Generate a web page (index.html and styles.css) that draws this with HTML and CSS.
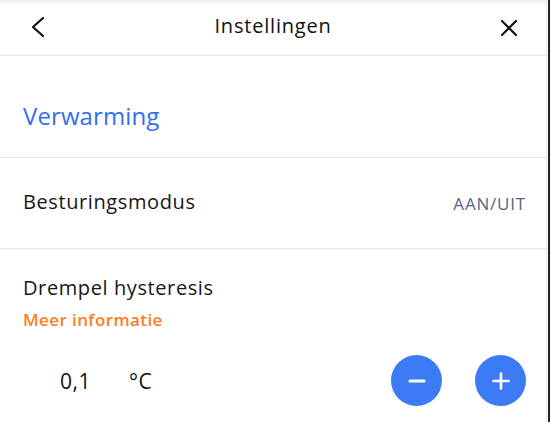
FILE: index.html
```html
<!DOCTYPE html>
<html lang="nl">
<head>
<meta charset="utf-8">
<link rel="stylesheet" href="styles.css">
</head>
<body>
<div class="frame">
  <div class="screen">
    <header class="topbar">
      <span class="icon-btn back">
        <svg width="16" height="22" viewBox="0 0 16 22"><path d="M13 2 L3 11 L13 20" fill="none" stroke="#111" stroke-width="2.2" stroke-linecap="round" stroke-linejoin="round"/></svg>
      </span>
      <h1 class="title">Instellingen</h1>
      <span class="icon-btn close">
        <svg width="18" height="18" viewBox="0 0 18 18"><path d="M2 2 L16 16 M16 2 L2 16" fill="none" stroke="#111" stroke-width="2.2" stroke-linecap="round"/></svg>
      </span>
    </header>
    <section class="section-head">
      <h2 class="section-title">Verwarming</h2>
    </section>
    <section class="row">
      <span class="label">Besturingsmodus</span>
      <span class="value">AAN/UIT</span>
    </section>
    <section class="setting">
      <div class="label">Drempel hysteresis</div>
      <a class="more">Meer informatie</a>
      <div class="stepper">
        <div class="reading">
          <span class="num">0,1</span>
          <span class="unit">°C</span>
        </div>
        <div class="buttons">
          <span class="round-btn">
            <svg width="24" height="24" viewBox="0 0 24 24"><path d="M5 12 H19" stroke="#fff" stroke-width="3" stroke-linecap="round"/></svg>
          </span>
          <span class="round-btn">
            <svg width="24" height="24" viewBox="0 0 24 24"><path d="M4.5 12 H19.5 M12 4.5 V19.5" stroke="#fff" stroke-width="2.6" stroke-linecap="round"/></svg>
          </span>
        </div>
      </div>
    </section>
  </div>
</div>
</body>
</html>
```
FILE: styles.css
```css
* { box-sizing: border-box; }
html, body { margin: 0; padding: 0; background: #fff; }
body { font-family: "Open Sans", "Noto Sans", sans-serif; color: #1a1a1a; }
.frame {
  width: 550px;
  height: 422px;
  border-right: 2px solid #222;
  overflow: hidden;
}
.screen {
  height: 100%;
  border-right: 1px solid #e6e6e6;
  margin-right: 1px;
}
.topbar {
  height: 56px;
  display: flex;
  align-items: center;
  justify-content: space-between;
  padding: 0 28px 0 30px;
  border-bottom: 1px solid #e6e6e6;
  background: linear-gradient(#ececec 0, #fafafa 4px, #fff 8px);
}
.icon-btn { display: flex; align-items: center; }
.back { margin-top: -2px; }
.title {
  margin: -4px 0 0;
  font-size: 20px;
  line-height: 26px;
  letter-spacing: 0.8px;
  font-weight: 400;
  color: #111;
}
.section-head {
  height: 102px;
  display: flex;
  align-items: center;
  padding: 0 23px;
  border-bottom: 1px solid #e6e6e6;
}
.section-title {
  margin: 0;
  font-size: 24px;
  line-height: 30px;
  letter-spacing: 0.1px;
  font-weight: 400;
  color: #2f6ff0;
  padding-top: 18px;
}
.row {
  height: 91px;
  display: flex;
  align-items: center;
  justify-content: space-between;
  padding: 0 20px 0 23px;
  border-bottom: 1px solid #e6e6e6;
}
.label { font-size: 20px; line-height: 26px; letter-spacing: 0.6px; color: #161616; }
.value { font-size: 17px; letter-spacing: 0.8px; color: #5b6382; }
.row .label { margin-top: -2px; }
.setting { padding: 26px 20px 0 23px; }
.more {
  display: block;
  margin-top: 8px;
  font-size: 17px;
  line-height: 22px;
  letter-spacing: 0.4px;
  font-weight: 600;
  color: #ff7d22;
}
.stepper {
  display: flex;
  align-items: center;
  justify-content: space-between;
  margin-top: 24px;
}
.reading { display: flex; gap: 38px; padding-left: 37px; font-size: 21px; letter-spacing: 0.5px; color: #111; }
.buttons { display: flex; gap: 33px; }
.round-btn {
  width: 51px;
  height: 51px;
  border-radius: 50%;
  background: #3d7bf5;
  display: flex;
  align-items: center;
  justify-content: center;
}
```
